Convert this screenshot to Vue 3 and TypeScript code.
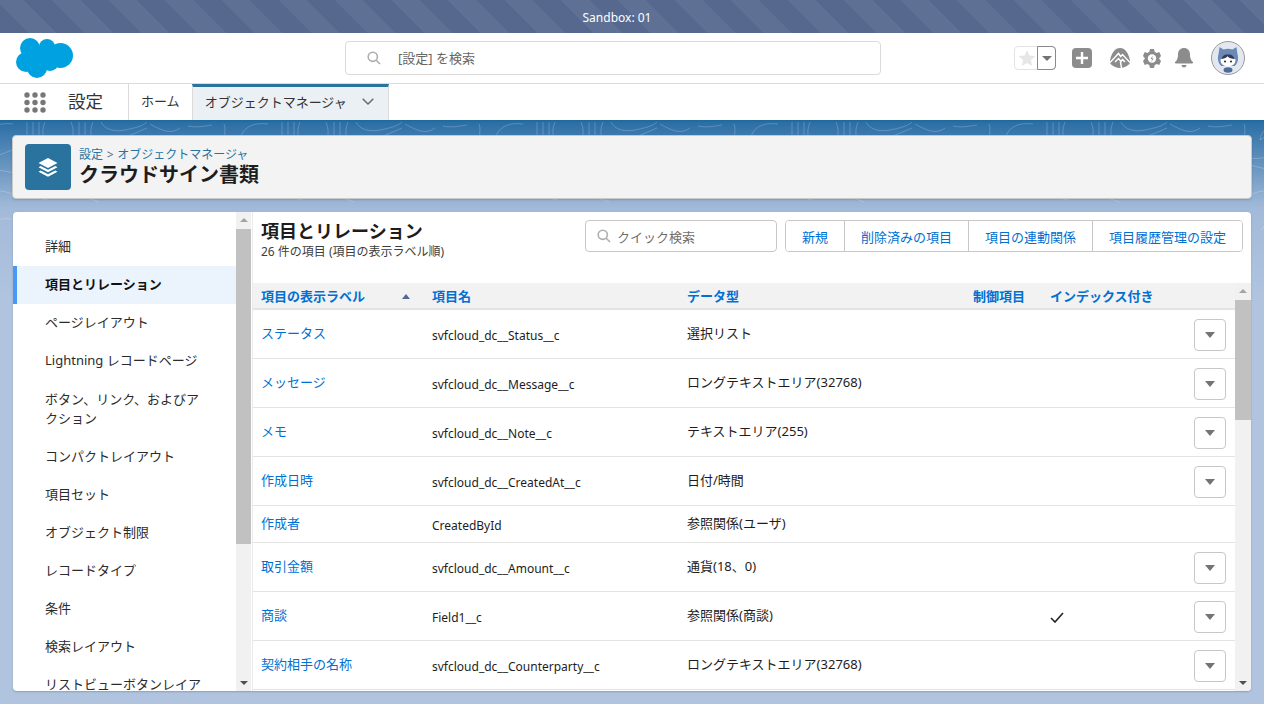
<script setup lang="ts">
interface FieldRow {
  label: string
  api: string
  type: string
  indexed?: boolean
  noAction?: boolean
}

const sideItems = [
  '詳細',
  '項目とリレーション',
  'ページレイアウト',
  'Lightning レコードページ',
  'ボタン、リンク、およびアクション',
  'コンパクトレイアウト',
  '項目セット',
  'オブジェクト制限',
  'レコードタイプ',
  '条件',
  '検索レイアウト',
  'リストビューボタンレイアウト',
]

const actions = ['新規', '削除済みの項目', '項目の連動関係', '項目履歴管理の設定']

const rows: FieldRow[] = [
  { label: 'ステータス', api: 'svfcloud_dc__Status__c', type: '選択リスト' },
  { label: 'メッセージ', api: 'svfcloud_dc__Message__c', type: 'ロングテキストエリア(32768)' },
  { label: 'メモ', api: 'svfcloud_dc__Note__c', type: 'テキストエリア(255)' },
  { label: '作成日時', api: 'svfcloud_dc__CreatedAt__c', type: '日付/時間' },
  { label: '作成者', api: 'CreatedById', type: '参照関係(ユーザ)', noAction: true },
  { label: '取引金額', api: 'svfcloud_dc__Amount__c', type: '通貨(18、0)' },
  { label: '商談', api: 'Field1__c', type: '参照関係(商談)', indexed: true },
  { label: '契約相手の名称', api: 'svfcloud_dc__Counterparty__c', type: 'ロングテキストエリア(32768)' },
]
</script>

<template>
  <div class="page">
    <svg class="contours" width="1264" height="110" aria-hidden="true">
      <defs>
        <pattern id="topo" x="148" y="-8" width="255" height="95" patternUnits="userSpaceOnUse">
          <path d="M2 12c14 8 22 10 30 4M40 14c10 2 16 0 24-1M76 12c2 4 0 8 1 14M92 28c2-12 12-18 28-16M92 28c8-6 16-4 14 4" />
          <path d="M134 10v22M140 10v22M146 10v22M152 10c-3 8-3 14 1 22M178 10c3 8 3 14-1 22M186 10v22M192 10v22M200 10c-3 8-3 14 1 22" />
          <path d="M208 10c4 8 14 10 24 8s18-4 22-8M214 28c14 0 26-6 40-12" />
          <path d="M4 48c18-12 40-8 52 0s-8 18-24 16-42-8-28-16z" />
          <path d="M70 42c14 8 30 4 44-2s28-2 34 6-14 18-32 14-40-4-46-18z" />
          <path d="M164 50c16-10 42-10 60-2s14 20-8 22-66-8-52-20z" />
          <path d="M178 54c10-5 26-5 36-1s6 9-5 10-40-3-31-9z" />
          <path d="M12 78c16-8 30 6 46 8M84 82c14-6 30-4 44 4M150 88c20-6 38-6 56 2" />
          <path d="M230 40c4 14 12 24 24 30M238 36c4 12 8 18 16 24" />
        </pattern>
      </defs>
      <rect width="1264" height="110" fill="url(#topo)" />
    </svg>

    <div class="sandbox">Sandbox: 01</div>

    <header class="global">
      <svg class="logo" width="58" height="40" viewBox="0 0 58 40">
        <g fill="#00a1e0">
          <circle cx="14" cy="10" r="10" />
          <circle cx="31" cy="9" r="8" />
          <circle cx="44.500" cy="17.500" r="12.500" />
          <circle cx="10" cy="24" r="10" />
          <circle cx="21" cy="30" r="10" />
          <circle cx="34" cy="24" r="9" />
          <rect x="12" y="10" width="30" height="16" />
        </g>
      </svg>
      <div class="global-search">
        <svg class="mag" width="14" height="14" viewBox="0 0 14 14">
          <circle cx="5.800" cy="5.800" r="4.600" />
          <path d="M9.200 9.200L13 13" />
        </svg>
        <span>[設定] を検索</span>
      </div>
      <div class="global-actions">
        <div class="fav">
          <span class="fav-star">
            <svg width="18" height="18" viewBox="0 0 18 18">
              <path d="M9 1l2.400 5.600 6.100.5-4.600 4 1.400 6L9 13.900 3.700 17.100l1.400-6-4.600-4 6.100-.5z" fill="#e6e6e6" />
            </svg>
          </span>
          <span class="fav-drop"><i class="caret small"></i></span>
        </div>
        <svg class="add" width="20" height="20" viewBox="0 0 20 20">
          <rect width="20" height="20" rx="4" fill="#8c8c8c" />
          <path d="M10 4v12M4 10h12" stroke="#fff" stroke-width="2.400" />
        </svg>
        <svg class="trail" width="20" height="20" viewBox="0 0 20 20">
          <path d="M10 0c2.500 0 4.500 1 6 3 2 2.500 3.500 6 4 9.500.2 1.500 0 3-.8 3.700C16.500 18.500 13.500 20 10 20s-6.500-1.500-9.200-3.800C0 15.500-.2 14 0 12.500.5 9 2 5.500 4 3c1.500-2 3.500-3 6-3z" fill="#8c8c8c" />
          <path d="M0 14.500L8.500 5.500l2.200 3 1.800-2 7.500 8M5 14l3.500-3.500 2.500 3 1.500-2 2.500 2.500M10.500 14l1 6" fill="none" stroke="#fff" stroke-width="1.500" />
        </svg>
        <svg class="gear" width="18" height="19" viewBox="0 0 18 19">
          <path d="M7 0h4l.6 2.800 2.100 1.100 2.600-1L18 7l-2 2.500L18 12l-1.700 4.100-2.600-1-2.100 1.100L11 19H7l-.6-2.800-2.100-1.100-2.600 1L0 12l2-2.500L0 7l1.700-4.100 2.600 1 2.100-1.100z" fill="#8c8c8c" />
          <circle cx="9" cy="9.500" r="4.200" fill="#fff" />
          <path d="M9.800 6.500L7.500 10h1.600l-.8 3 2.300-3.600H9z" fill="#8c8c8c" />
        </svg>
        <svg class="bell" width="20" height="20" viewBox="0 0 20 20">
          <path d="M10 0c3.500 0 6 2.600 6 6.500 0 3.600.8 5.600 2.600 7.300.9.800.4 1.700-.6 1.700H2c-1 0-1.500-.9-.6-1.700C3.200 12.100 4 10.100 4 6.500 4 2.600 6.500 0 10 0z" fill="#8c8c8c" />
          <path d="M7.500 17h5c0 1.500-1 2.500-2.500 2.500S7.500 18.500 7.500 17z" fill="#8c8c8c" />
        </svg>
        <svg class="avatar" width="34" height="34" viewBox="0 0 34 34">
          <circle cx="17" cy="17" r="16.500" fill="#e3e8f0" stroke="#9a9a9a" />
          <path d="M8.500 6l4 2.600c3-1 6-1 9 0l4-2.600 1 7c1.500 5.500 0 10-3 12H10.500c-3-2-4.500-6.500-3-12z" fill="#6c8ab7" />
          <ellipse cx="17" cy="19.500" rx="7.500" ry="6" fill="#fff" />
          <path d="M10 18c2.500 0 5-1 6.500-2.800 1.500 1.800 4 2.800 7.500 2.800-.8-3-3.500-4.700-7-4.700s-6.200 1.700-7 4.700z" fill="#2f3c58" />
          <circle cx="14" cy="20.500" r="1" fill="#222" />
          <circle cx="20" cy="20.500" r="1" fill="#222" />
          <ellipse cx="17" cy="29" rx="4.500" ry="2.800" fill="#4d6a9a" />
        </svg>
      </div>
    </header>

    <nav class="appnav">
      <svg class="waffle" width="22" height="21" viewBox="0 0 22 21">
        <g fill="#777">
          <circle cx="3" cy="3" r="2.700" /><circle cx="11" cy="3" r="2.700" /><circle cx="19" cy="3" r="2.700" />
          <circle cx="3" cy="10.500" r="2.700" /><circle cx="11" cy="10.500" r="2.700" /><circle cx="19" cy="10.500" r="2.700" />
          <circle cx="3" cy="18" r="2.700" /><circle cx="11" cy="18" r="2.700" /><circle cx="19" cy="18" r="2.700" />
        </g>
      </svg>
      <span class="app-name">設定</span>
      <a class="tab">ホーム</a>
      <a class="tab active">
        オブジェクトマネージャ
        <svg width="12" height="7" viewBox="0 0 12 7"><path d="M.7.7L6 6l5.300-5.300" fill="none" stroke="#666" stroke-width="1.400" /></svg>
      </a>
    </nav>

    <main class="body">
      <section class="title-card">
        <div class="title-icon">
          <svg width="20" height="19" viewBox="0 0 20 19" fill="#fff">
            <path d="M10 0l9.500 5L10 10 .5 5z" />
            <path d="M2.700 8l7.300 3.800L17.300 8l2.200 1.200L10 14.200.5 9.200z" />
            <path d="M2.700 12.500l7.300 3.800 7.300-3.800 2.200 1.200L10 18.700.5 13.700z" />
          </svg>
        </div>
        <div class="title-text">
          <div class="crumbs"><a>設定</a> <span>&gt;</span> <a>オブジェクトマネージャ</a></div>
          <h1>クラウドサイン書類</h1>
        </div>
      </section>

      <section class="main-card">
        <aside class="side">
          <ul>
            <li v-for="(item, i) in sideItems" :key="item" :class="{ current: i === 1 }">{{ item }}</li>
          </ul>
        </aside>
        <div class="scroll side-scroll">
          <i class="arrow up"></i>
          <div class="thumb"></div>
          <i class="arrow down"></i>
        </div>

        <div class="content">
          <div class="content-head">
            <div>
              <h2>項目とリレーション</h2>
              <p>26 件の項目 (項目の表示ラベル順)</p>
            </div>
            <div class="quick">
              <svg class="mag" width="14" height="14" viewBox="0 0 14 14">
                <circle cx="5.800" cy="5.800" r="4.600" />
                <path d="M9.200 9.200L13 13" />
              </svg>
              クイック検索
            </div>
            <div class="btn-group">
              <button v-for="a in actions" :key="a" type="button">{{ a }}</button>
            </div>
          </div>

          <div class="table-wrap">
            <div class="table">
              <div class="row head">
                <span class="sorted">項目の表示ラベル<i class="sort"></i></span>
                <span>項目名</span>
                <span>データ型</span>
                <span>制御項目</span>
                <span>インデックス付き</span>
              </div>
              <div v-for="r in rows" :key="r.label" class="row" :class="{ short: r.noAction }">
                <a class="lbl">{{ r.label }}</a>
                <span class="api">{{ r.api }}</span>
                <span class="type">{{ r.type }}</span>
                <span></span>
                <span>
                  <svg v-if="r.indexed" class="check" width="14" height="11" viewBox="0 0 14 11">
                    <path d="M1 6l4 4 8-9" fill="none" stroke="#222" stroke-width="1.600" />
                  </svg>
                </span>
                <span v-if="!r.noAction" class="menu"><i class="caret"></i></span>
              </div>
            </div>
            <div class="scroll table-scroll">
              <i class="arrow up"></i>
              <div class="thumb"></div>
              <i class="arrow down"></i>
            </div>
          </div>
        </div>
      </section>
    </main>
  </div>
</template>

<style>
html,
body {
  margin: 0;
  overflow: hidden;
}
</style>

<style scoped>
.page {
  position: relative;
  width: 1264px;
  height: 704px;
  overflow: hidden;
  display: flex;
  flex-direction: column;
  font-family: "Noto Sans", "Noto Sans CJK JP", sans-serif;
  font-size: 13px;
  color: #1d1d1d;
  background: linear-gradient(180deg, #1c6a9b 120px, #2c6fa6 123px, #a2bad9 208px, #b0c4df 300px);
}

.contours {
  position: absolute;
  left: 0;
  top: 120px;
}
.contours path {
  fill: none;
  stroke: rgba(255, 255, 255, 0.2);
  stroke-width: 1;
}

.sandbox {
  position: relative;
  height: 33px;
  flex: none;
  box-sizing: border-box;
  padding-right: 30px;
  line-height: 35px;
  text-align: center;
  font-size: 12px;
  color: #fff;
  background: repeating-linear-gradient(45deg, #56688e 0 20px, #5e7093 20px 40px);
}

.global {
  position: relative;
  height: 51px;
  box-sizing: border-box;
  flex: none;
  background: #fff;
  border-bottom: 1px solid #dddbda;
  display: flex;
  align-items: center;
  padding: 0 19px 0 16px;
}
.logo {
  flex: none;
}
.global-search {
  width: 536px;
  height: 34px;
  box-sizing: border-box;
  margin-left: 271px;
  margin-top: -1px;
  border: 1px solid #dddbda;
  border-radius: 4px;
  display: flex;
  align-items: center;
  padding-left: 21px;
  color: #666;
}
.global-search span {
  margin-left: 17px;
}
.mag {
  flex: none;
  fill: none;
  stroke: #b0adab;
  stroke-width: 1.600;
}
.global-actions {
  margin-left: auto;
  display: flex;
  align-items: center;
}
.fav {
  width: 42px;
  height: 24px;
  display: flex;
  box-sizing: border-box;
  border: 1px solid #e3e3e3;
  border-radius: 4px;
}
.fav-star {
  width: 23px;
  display: flex;
  align-items: center;
  justify-content: center;
}
.fav-drop {
  flex: 1;
  margin: -1px;
  border: 1px solid #8a8a8a;
  border-radius: 0 4px 4px 0;
  display: flex;
  align-items: center;
  justify-content: center;
}
.add {
  margin-left: 16px;
}
.trail {
  margin-left: 18px;
}
.gear {
  margin-left: 13px;
}
.bell {
  margin-left: 13px;
}
.avatar {
  margin-left: 17px;
}

.caret {
  display: block;
  width: 0;
  height: 0;
  border-left: 5px solid transparent;
  border-right: 5px solid transparent;
  border-top: 6px solid #747474;
}
.caret.small {
  border-left-width: 5px;
  border-right-width: 5px;
  border-top-width: 5px;
}

.appnav {
  position: relative;
  height: 36px;
  flex: none;
  background: #fff;
  display: flex;
  align-items: stretch;
}
.waffle {
  margin: 8px 0 0 24px;
}
.app-name {
  margin-left: 22px;
  width: 60px;
  font-size: 17.500px;
  line-height: 35px;
  color: #333;
}
.tab {
  border-left: 1px solid #dddbda;
  padding: 0 12px;
  line-height: 34px;
  color: #333;
}
.tab.active {
  width: 197px;
  box-sizing: border-box;
  background: #eaf0f4;
  border-top: 3px solid #2a739e;
  border-right: 1px solid #dddbda;
  padding-bottom: 4px;
  display: flex;
  align-items: center;
  gap: 15px;
}

.body {
  position: relative;
  flex: 1;
  min-height: 0;
  display: flex;
  flex-direction: column;
  padding: 15px 12px 13px 12px;
}

.title-card {
  height: 64px;
  flex: none;
  box-sizing: border-box;
  background: #f3f3f3;
  border: 1px solid #c9c9c9;
  border-radius: 4px;
  box-shadow: 0 1px 2px rgba(0, 0, 0, 0.15);
  display: flex;
  align-items: center;
  padding-left: 12px;
  gap: 8px;
}
.title-icon {
  width: 46px;
  height: 46px;
  flex: none;
  background: #2a739e;
  border-radius: 4px;
  display: flex;
  align-items: center;
  justify-content: center;
}
.title-text {
  align-self: flex-start;
  margin-top: 11px;
}
.crumbs {
  font-size: 12px;
  line-height: 16px;
  color: #54698d;
}
.crumbs a {
  color: #2a739e;
}
.crumbs span {
  margin: 0 0.500px;
}
h1 {
  margin: 0;
  font-size: 20px;
  font-weight: 700;
  line-height: 24px;
  color: #1d1d1d;
}

.main-card {
  flex: 1;
  min-height: 0;
  margin: 13px 1px 0;
  background: #fff;
  border-radius: 4px;
  box-shadow: 0 1px 2px rgba(0, 0, 0, 0.2);
  display: flex;
  overflow: hidden;
}

.side {
  width: 223px;
  flex: none;
  overflow: hidden;
}
.side ul {
  list-style: none;
  margin: 0;
  padding: 16px 0 0;
}
.side li {
  padding: 9px 30px 10px 32px;
  line-height: 19px;
  color: #2b2b2b;
}
.side li:nth-child(n + 5) {
  padding: 9.500px 30px;
  padding-left: 32px;
}
.side li.current {
  font-weight: 700;
  background: #ebf3fc;
  box-shadow: inset 4px 0 0 #4a98f5;
  color: #111;
}

.scroll {
  width: 15px;
  flex: none;
  background: #f1f1f1;
  position: relative;
  display: flex;
  flex-direction: column;
}
.thumb {
  background: #c1c1c1;
}
.side-scroll .thumb {
  height: 315px;
  margin-top: 17px;
}
.table-scroll {
  width: 16px;
}
.table-scroll .thumb {
  height: 120px;
  margin-top: 17px;
}
.arrow {
  position: absolute;
  left: 4px;
  width: 0;
  height: 0;
  border-left: 4px solid transparent;
  border-right: 4px solid transparent;
}
.arrow.up {
  top: 6px;
  border-bottom: 4px solid #a3a3a3;
}
.arrow.down {
  bottom: 6px;
  border-top: 4px solid #505050;
}

.content {
  flex: 1;
  min-width: 0;
  margin-left: 1px;
  border-left: 1px solid #ececec;
  display: flex;
  flex-direction: column;
}
.content-head {
  height: 71px;
  box-sizing: border-box;
  flex: none;
  display: flex;
  align-items: flex-start;
  padding: 8px 8px 0 8px;
}
.content-head > div:first-child {
  width: 324px;
}
h2 {
  margin: 0;
  font-size: 18px;
  font-weight: 700;
  line-height: 23px;
}
.content-head p {
  margin: 0;
  font-size: 12px;
  line-height: 17px;
  color: #3e3e3c;
}
.quick {
  width: 192px;
  height: 32px;
  box-sizing: border-box;
  border: 1px solid #c9c7c5;
  border-radius: 4px;
  display: flex;
  align-items: center;
  gap: 6px;
  padding-left: 11px;
  color: #706e6b;
}
.btn-group {
  margin-left: 8px;
  display: flex;
  height: 32px;
  box-sizing: border-box;
  border: 1px solid #c9c7c5;
  border-radius: 4px;
  overflow: hidden;
}
.btn-group button {
  font: inherit;
  color: #0070d2;
  background: #fff;
  border: 0;
  border-left: 1px solid #c9c7c5;
  padding: 0 16px;
  white-space: nowrap;
}
.btn-group button:first-child {
  border-left: 0;
}

.table-wrap {
  flex: 1;
  min-height: 0;
  display: flex;
  overflow: hidden;
}
.table {
  flex: 1;
  min-width: 0;
  overflow: hidden;
}
.row {
  display: grid;
  grid-template-columns: 171px 255px 286px 77px 144px 32px;
  align-items: center;
  padding-left: 8px;
  height: 49px;
  box-sizing: border-box;
  border-bottom: 1px solid #e3e3e3;
  line-height: 18px;
}
.row.short {
  height: 37px;
}
.row.head {
  height: 27px;
  background: #f2f2f2;
  color: #0070d2;
  font-weight: 700;
  border-bottom: 2px solid #e3e3e3;
}
.sorted {
  position: relative;
}
.sort {
  position: absolute;
  right: 22px;
  top: 7px;
  width: 0;
  height: 0;
  border-left: 4px solid transparent;
  border-right: 4px solid transparent;
  border-bottom: 5px solid #54698d;
}
.lbl {
  color: #0070d2;
  margin-top: -2px;
}
.api {
  font-size: 12px;
  margin-top: 3px;
}
.type {
  margin-top: -2px;
}
.check {
  display: block;
  margin-top: 3px;
}
.menu {
  width: 32px;
  height: 32px;
  box-sizing: border-box;
  border: 1px solid #c9c7c5;
  border-radius: 4px;
  display: flex;
  align-items: center;
  justify-content: center;
  margin-top: 1px;
}
</style>
